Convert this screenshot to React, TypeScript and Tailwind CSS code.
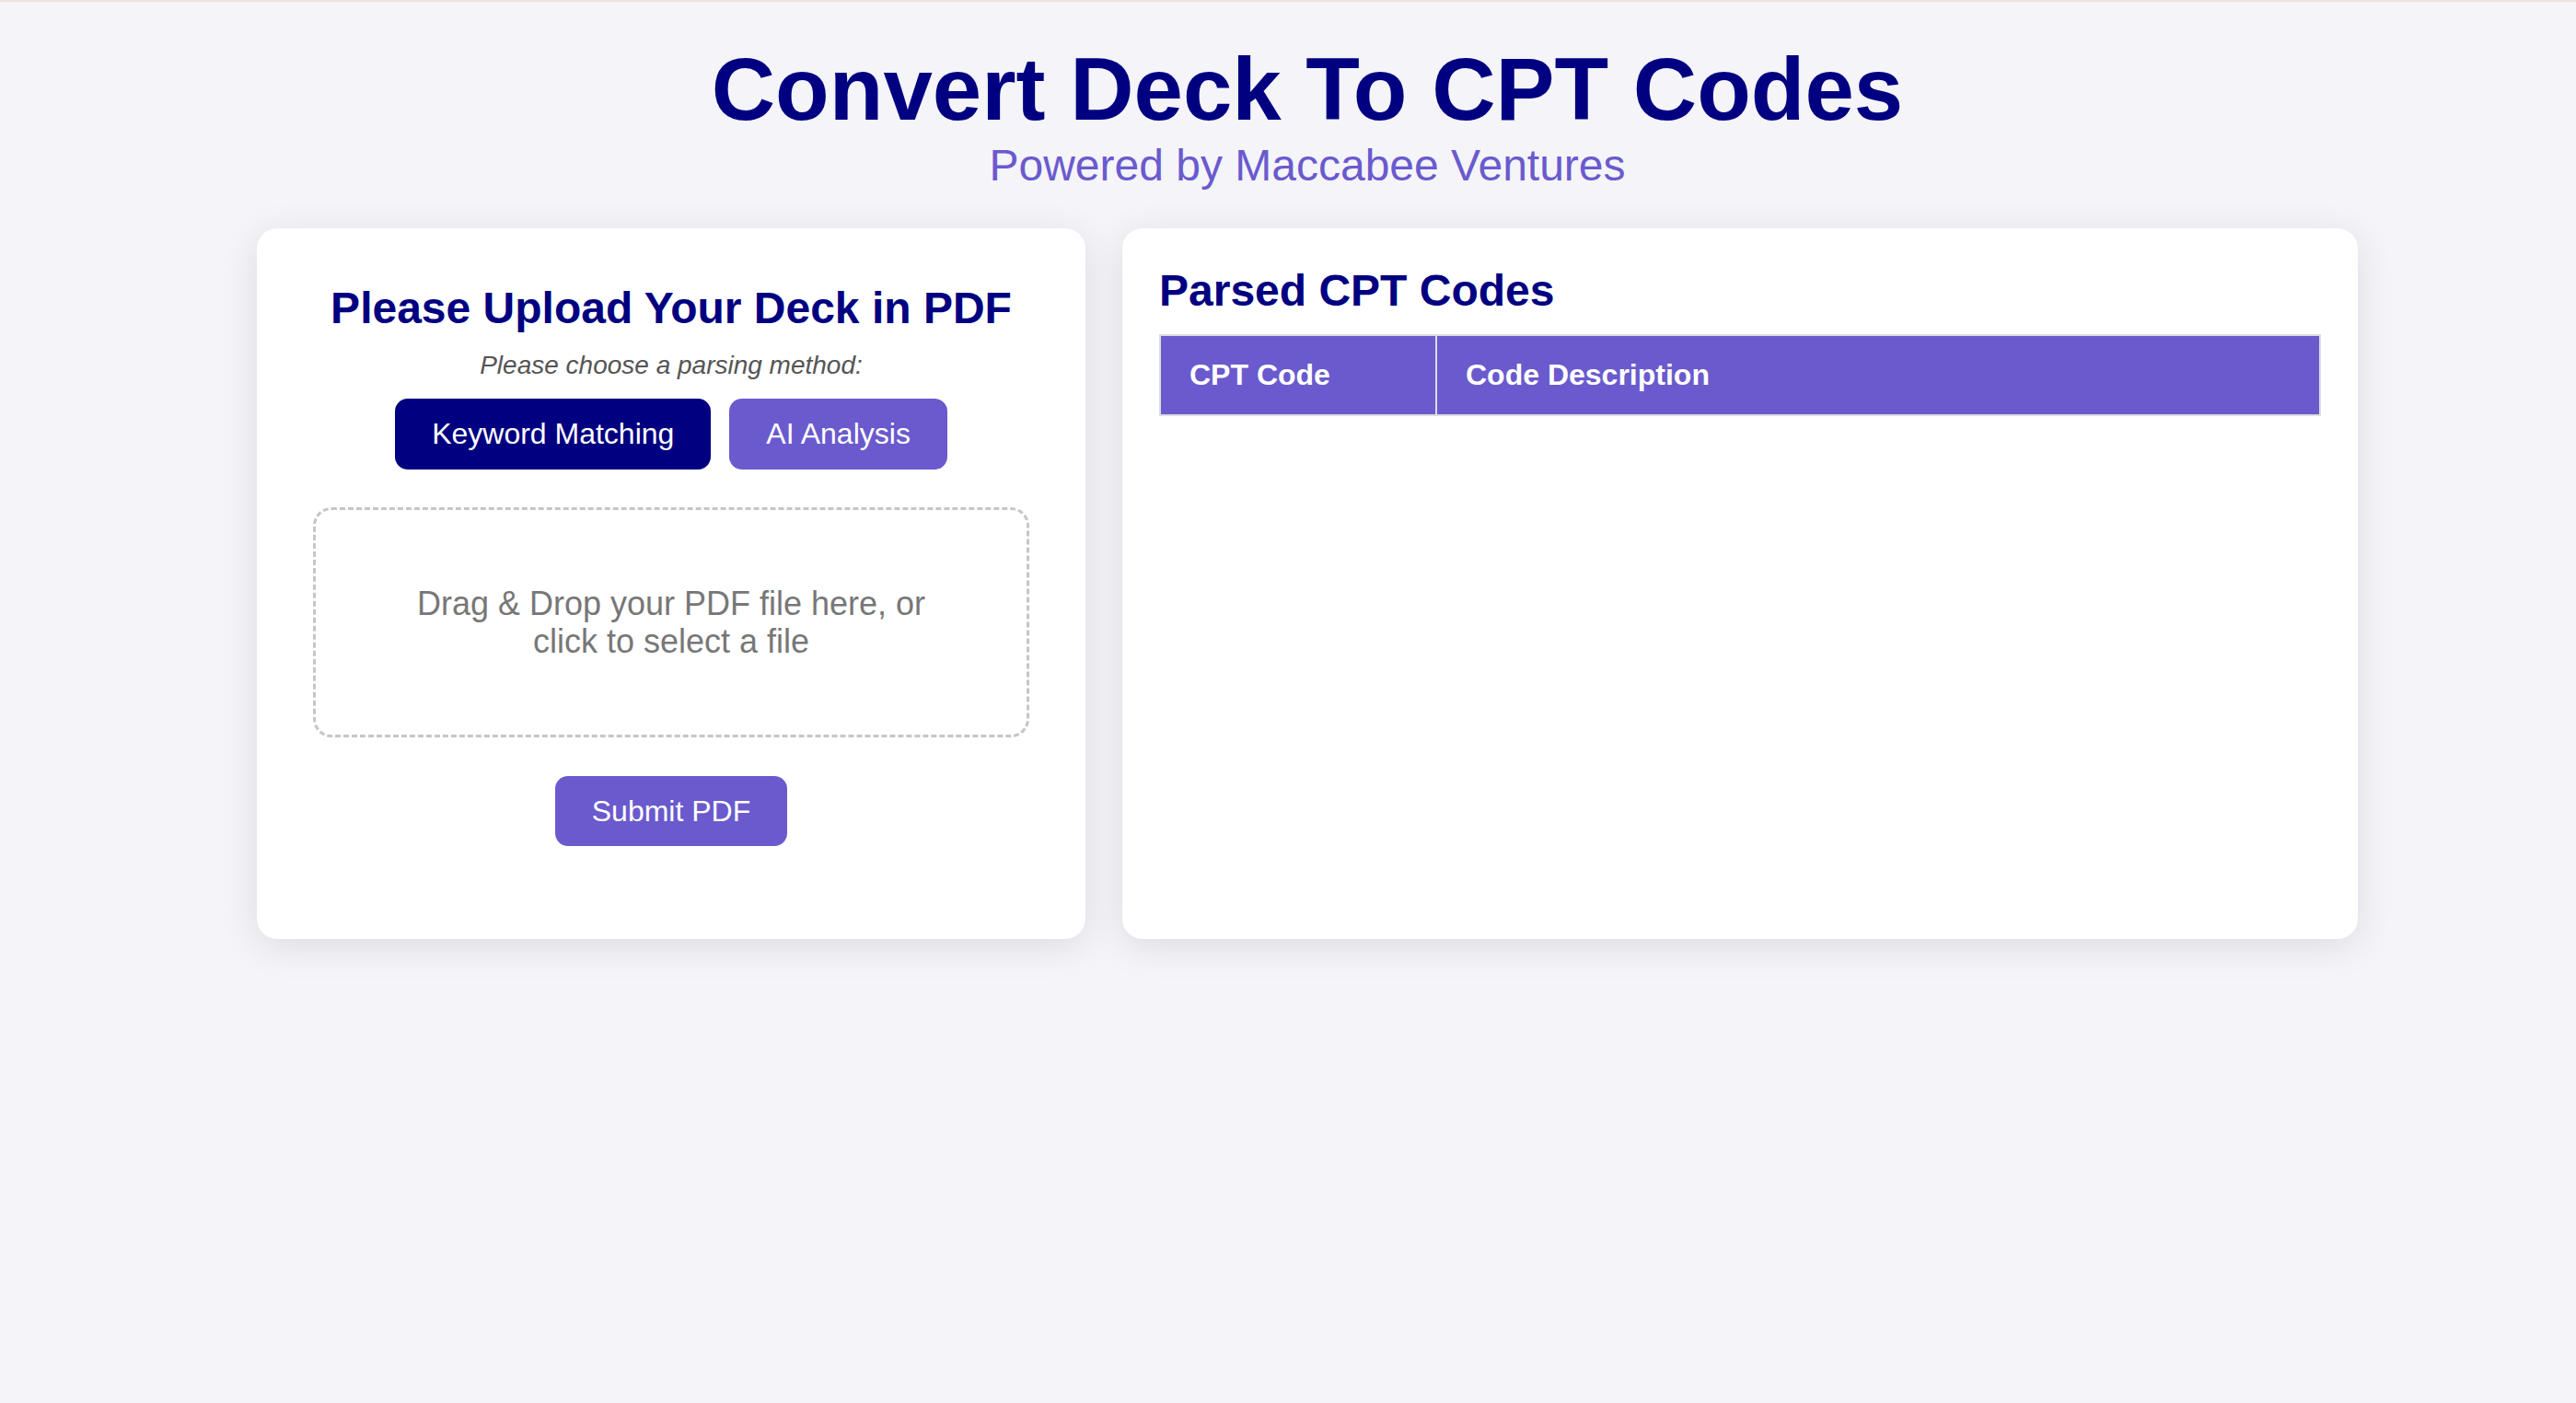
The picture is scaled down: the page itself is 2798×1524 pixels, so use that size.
import React from "react";

export default function App() {
  return (
    <div className="min-h-[1524px] bg-[#f4f4f9] font-['Liberation_Sans',Arial,sans-serif]">
      <div className="h-[2px] bg-[#f0e4da]" />
      <div className="flex flex-col items-center pl-[42px] pt-[40px]">
        <h1 className="text-[96px] leading-[110px] font-bold text-[#000080]">
          Convert Deck To CPT Codes
        </h1>
        <p className="text-[48px] leading-[55px] text-[#6a5acd]">Powered by Maccabee Ventures</p>

        <div className="mt-[41px] flex items-stretch gap-[40px]">
          <div className="w-[900px] rounded-[22px] bg-white px-[61px] pt-[59px] pb-[101px] shadow-[0_8px_40px_rgba(0,0,0,0.1)] flex flex-col items-center">
            <h2 className="text-[48px] leading-[55px] font-bold text-[#000080]">
              Please Upload Your Deck in PDF
            </h2>
            <p className="mt-[19px] text-[28px] leading-[32px] italic text-[#555]">
              Please choose a parsing method:
            </p>
            <div className="mt-[20px] flex gap-[20px]">
              <button className="rounded-[14px] bg-[#000080] px-[40px] py-[20px] text-[32px] leading-[37px] text-white">
                Keyword Matching
              </button>
              <button className="rounded-[14px] bg-[#6a5acd] px-[40px] py-[20px] text-[32px] leading-[37px] text-white">
                AI Analysis
              </button>
            </div>
            <div className="mt-[41px] flex h-[250px] w-full items-center justify-center rounded-[20px] border-[3px] border-dashed border-[#c6c6c6] px-[80px] text-center text-[36px] leading-[41px] text-[#777]">
              Drag &amp; Drop your PDF file here, or click to select a file
            </div>
            <button className="mt-[42px] rounded-[14px] bg-[#6a5acd] px-[40px] py-[20px] text-[32px] leading-[36px] text-white">
              Submit PDF
            </button>
          </div>

          <div className="w-[1342px] rounded-[22px] bg-white px-[40px] pt-[40px] shadow-[0_8px_40px_rgba(0,0,0,0.1)]">
            <h2 className="text-[48px] leading-[55px] font-bold text-[#000080]">Parsed CPT Codes</h2>
            <table className="mt-[20px] w-full border-collapse">
              <thead>
                <tr className="bg-[#6a5acd]">
                  <th className="w-[300px] border-2 border-[#dddddd] px-[31px] py-[24px] text-left text-[32px] leading-[37px] font-bold text-white">
                    CPT Code
                  </th>
                  <th className="border-2 border-[#dddddd] px-[31px] py-[24px] text-left text-[32px] leading-[37px] font-bold text-white">
                    Code Description
                  </th>
                </tr>
              </thead>
              <tbody />
            </table>
          </div>
        </div>
      </div>
    </div>
  );
}
